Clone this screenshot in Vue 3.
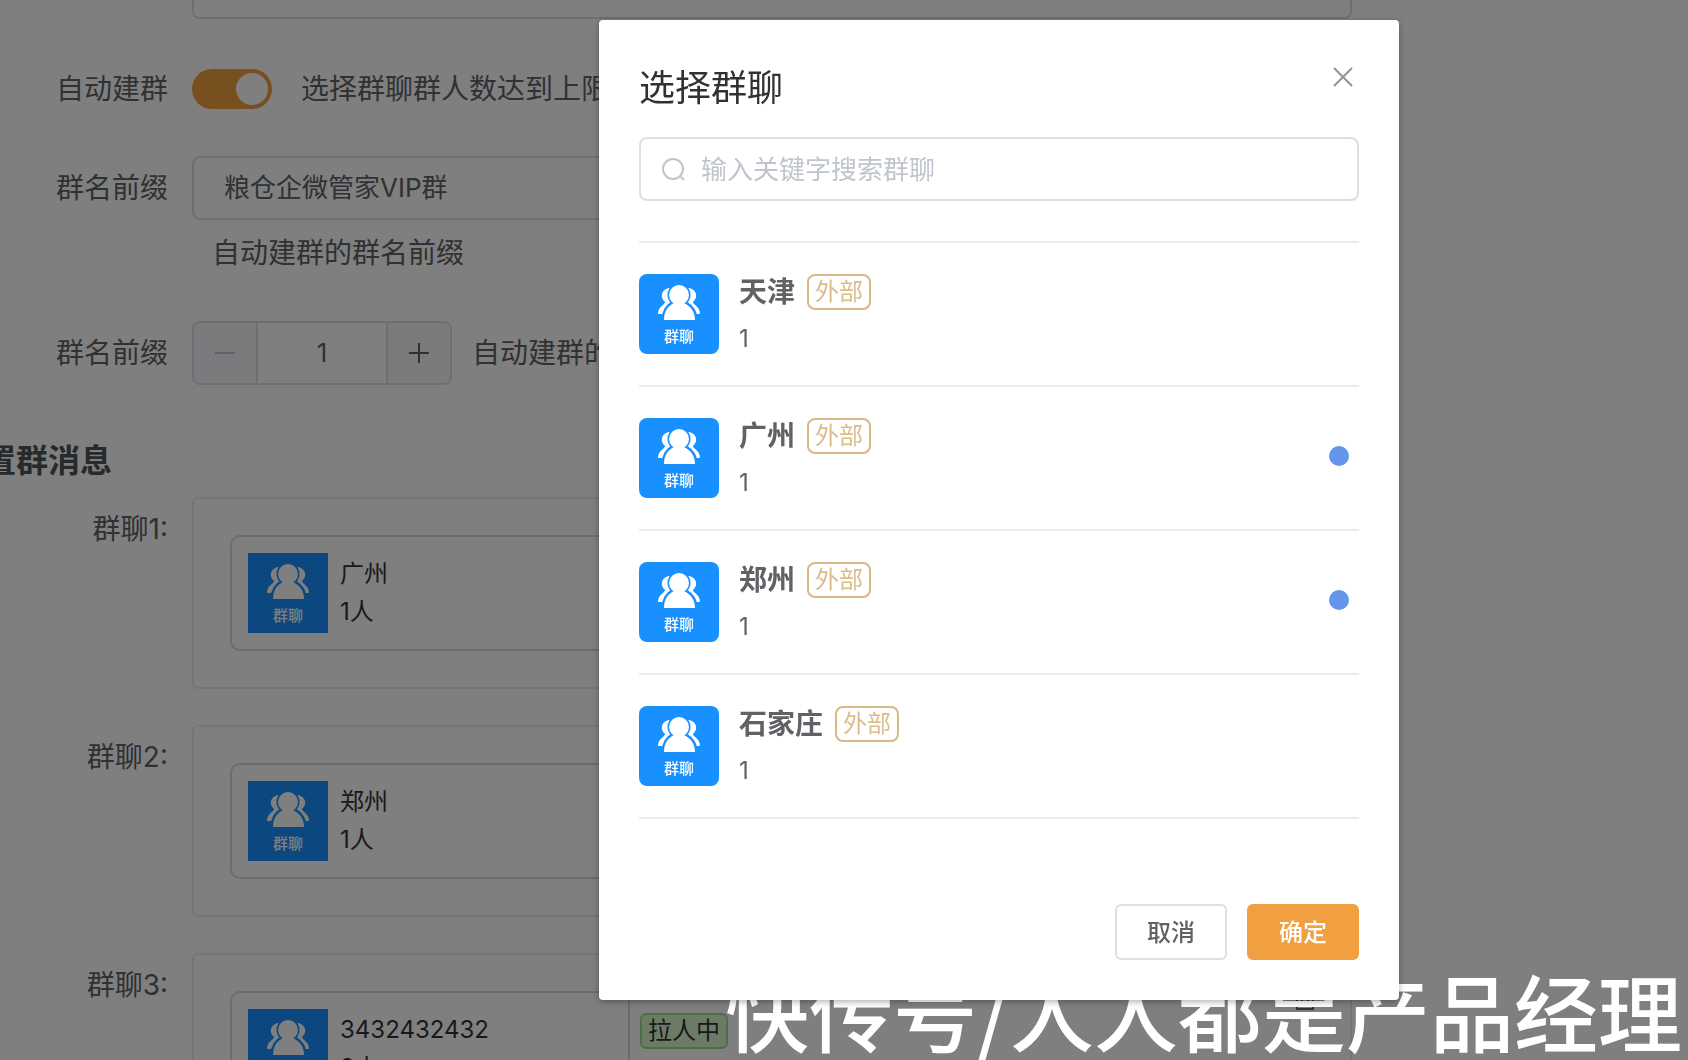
<script setup>
import { ref } from 'vue'

const autoCreate = ref(true)
const prefix = ref('粮仓企微管家VIP群')
const startNumber = ref(1)
const keyword = ref('')

const messages = [
  { label: '群聊1:', name: '广州', count: '1人' },
  { label: '群聊2:', name: '郑州', count: '1人' },
  { label: '群聊3:', name: '3432432432', count: '2人' },
]

const groups = ref([
  { name: '天津', count: 1, selected: false },
  { name: '广州', count: 1, selected: true },
  { name: '郑州', count: 1, selected: true },
  { name: '石家庄', count: 1, selected: false },
])
</script>

<template>
  <div class="page">
    <main class="form">
      <div class="row first">
        <span class="label"></span>
        <textarea class="note" aria-label="群描述"></textarea>
      </div>

      <div class="row auto">
        <label class="label" for="auto">自动建群</label>
        <input id="auto" v-model="autoCreate" class="switch" type="checkbox" role="switch" />
        <span class="switch-text">选择群聊群人数达到上限</span>
      </div>

      <div class="row prefix">
        <label class="label" for="prefix">群名前缀</label>
        <div class="grow">
          <input id="prefix" v-model="prefix" class="text-input" type="text" />
          <p class="help">自动建群的群名前缀</p>
        </div>
      </div>

      <div class="row number">
        <label class="label" for="start">群名前缀</label>
        <div class="stepper">
          <button type="button" disabled aria-label="减少">
            <svg viewBox="0 0 20 20"><path d="M0 10H20" /></svg>
          </button>
          <input id="start" v-model="startNumber" type="text" />
          <button type="button" aria-label="增加" @click="startNumber++">
            <svg viewBox="0 0 20 20"><path d="M0 10H20M10 0V20" /></svg>
          </button>
        </div>
        <span class="number-text">自动建群的</span>
      </div>

      <h2 class="heading">置群消息</h2>

      <div v-for="m in messages" :key="m.label" class="row message">
        <span class="label">{{ m.label }}</span>
        <section class="panel">
          <div class="chat">
            <svg class="avatar" viewBox="0 0 80 80" aria-hidden="true">
              <use href="#people" />
              <text x="40" y="68">群聊</text>
            </svg>
            <div class="chat-text">
              <div>{{ m.name }}</div>
              <div>{{ m.count }}</div>
            </div>
          </div>
          <span class="status">拉人中</span>
          <button class="remove" type="button" aria-label="删除">
            <svg viewBox="0 0 24 20"><path d="M3 4H24M11 4V1H19V4M7 4V18H23V4M12 7V10M18 7V10" /></svg>
          </button>
        </section>
      </div>
    </main>

    <div class="mask"></div>
    <div class="watermark">快传号/人人都是产品经理</div>

    <div class="overlay">
      <section class="dialog" role="dialog" aria-modal="true" aria-labelledby="dialog-title">
        <header class="dialog-head">
          <h1 id="dialog-title">选择群聊</h1>
          <button class="close" type="button" aria-label="关闭">
            <svg viewBox="0 0 20 20"><path d="M1 1L19 19M19 1L1 19" /></svg>
          </button>
        </header>

        <label class="search">
          <svg viewBox="0 0 24 24" aria-hidden="true">
            <circle cx="11" cy="12" r="10" />
            <path d="M18 19L22 23" />
          </svg>
          <input v-model="keyword" type="text" placeholder="输入关键字搜索群聊" aria-label="搜索群聊" />
        </label>

        <ul class="groups">
          <li v-for="g in groups" :key="g.name">
            <label class="group">
              <svg class="avatar rounded" viewBox="0 0 80 80" aria-hidden="true">
                <use href="#people" />
                <text x="40" y="68">群聊</text>
              </svg>
              <span class="info">
                <span class="title">
                  <strong>{{ g.name }}</strong>
                  <span class="tag">外部</span>
                </span>
                <span class="count">{{ g.count }}</span>
              </span>
              <input v-model="g.selected" class="dot" type="checkbox" />
            </label>
          </li>
        </ul>

        <footer class="actions">
          <button type="button">取消</button>
          <button type="button" class="primary">确定</button>
        </footer>
      </section>
    </div>

    <svg class="defs" aria-hidden="true">
      <symbol id="people" viewBox="0 0 80 80">
        <path d="M30 14C23 15 20 23 26 28C26 31 19 32 19 40H24L34 31V15Z" />
        <path d="M50 14C57 15 60 23 54 28C54 31 61 32 61 40H56L46 31V15Z" />
        <g stroke="#1890ff" stroke-width="5">
          <circle cx="40" cy="21" r="9" />
          <path d="M25 46C25 37 29 32 35 29H45C51 32 56 37 56 46Z" />
        </g>
        <circle cx="40" cy="21" r="10" />
        <path d="M25 46C25 37 29 32 35 29H45C51 32 56 37 56 46Z" />
      </symbol>
    </svg>
  </div>
</template>

<style>
body {
  overflow: hidden;
}
</style>

<style scoped>
.page,
.page * {
  box-sizing: border-box;
}
.page {
  height: 100vh;
  overflow: hidden;
  background: #fff;
  color: #606266;
  font-family: Inter, "Noto Sans CJK SC", sans-serif;
  font-size: 28px;
}
button,
input,
textarea {
  margin: 0;
  padding: 0;
  font: inherit;
  color: inherit;
}
svg {
  display: block;
  fill: none;
  stroke: currentColor;
  stroke-width: 2;
}
.defs {
  display: none;
}

/* form behind the dialog */
.form {
  padding-right: 336px;
}
.row {
  display: flex;
  align-items: center;
  line-height: 64px;
}
.label {
  flex: none;
  width: 168px;
  margin-right: 24px;
  text-align: right;
  white-space: nowrap;
}
.grow {
  flex: 1;
}
.note {
  flex: 1;
  height: 19px;
  border: 2px solid #dcdfe6;
  border-top: 0;
  border-radius: 0 0 8px 8px;
  background: #fff;
  resize: none;
}
.auto {
  margin: 38px 0 35px;
}
.switch {
  appearance: none;
  flex: none;
  width: 80px;
  height: 40px;
  padding: 4px;
  border-radius: 20px;
  background: #dcdfe6;
}
.switch:checked {
  background: #f0a040;
}
.switch::before {
  content: "";
  display: block;
  width: 32px;
  height: 32px;
  border-radius: 50%;
  background: #fff;
}
.switch:checked::before {
  margin-left: auto;
}
.switch-text {
  margin-left: 29px;
  white-space: nowrap;
}
.prefix,
.message {
  align-items: flex-start;
}
.text-input {
  display: block;
  width: 100%;
  height: 64px;
  padding: 0 30px;
  border: 2px solid #dcdfe6;
  border-radius: 8px;
  background: #fff;
  font-size: 26px;
}
.help {
  margin: 12px 20px 47px;
  line-height: 42px;
}
.stepper {
  display: flex;
  width: 260px;
  height: 64px;
  overflow: hidden;
  border: 2px solid #dcdfe6;
  border-radius: 8px;
}
.stepper button {
  display: grid;
  place-items: center;
  width: 62px;
  border: 0;
  background: #f5f7fa;
}
.stepper button:disabled {
  color: #c0c4cc;
}
.stepper svg {
  width: 20px;
  height: 20px;
}
.stepper input {
  flex: 1;
  min-width: 0;
  border: solid #dcdfe6;
  border-width: 0 2px;
  background: #fff;
  font-size: 26px;
  text-align: center;
}
.number-text {
  margin-left: 20px;
  white-space: nowrap;
}
.heading {
  margin: 56px 0 16px -16px;
  color: #505255;
  font-size: 32px;
  font-weight: 700;
  line-height: 40px;
}
.message {
  margin-bottom: 36px;
}
.panel {
  display: flex;
  flex: 1;
  align-items: flex-start;
  height: 192px;
  padding: 36px;
  border: 2px solid #ebebeb;
  border-radius: 6px;
}
.chat {
  display: flex;
  gap: 12px;
  width: 400px;
  padding: 16px;
  border: 2px solid #d8d8d8;
  border-radius: 10px;
}
.chat-text {
  padding-top: 2px;
  color: #333;
  font-size: 24px;
  line-height: 38px;
}
.avatar {
  flex: none;
  width: 80px;
  height: 80px;
  background: #1890ff;
  color: #fff;
  fill: #fff;
  stroke: none;
}
.avatar text {
  font-size: 15px;
  font-weight: 500;
  text-anchor: middle;
}
.rounded {
  border-radius: 8px;
}
.status {
  margin: 22px 0 0 10px;
  padding: 0 6px;
  border: 2px solid #96e08c;
  border-radius: 6px;
  background: #d9f7cc;
  color: #333;
  font-size: 24px;
  line-height: 32px;
}
.remove {
  width: 24px;
  height: 20px;
  margin-left: auto;
  border: 0;
  background: none;
}

/* layers over the form */
.mask {
  position: fixed;
  inset: 0;
  background: rgba(0, 0, 0, 0.5);
}
.watermark {
  position: fixed;
  right: 6px;
  bottom: 4px;
  color: #fff;
  font-family: "Noto Sans CJK SC", sans-serif;
  font-size: 84px;
  font-weight: 500;
  line-height: 92px;
  white-space: nowrap;
}
.overlay {
  position: fixed;
  inset: 0;
  display: flex;
  align-items: flex-start;
  justify-content: center;
  padding: 20px 0 0 310px;
}
.dialog {
  width: 800px;
  padding: 40px;
  border-radius: 4px;
  background: #fff;
  box-shadow: 0 2px 6px rgba(0, 0, 0, 0.3);
}
.dialog-head {
  display: flex;
  align-items: flex-start;
  justify-content: space-between;
  margin-bottom: 21px;
}
.dialog-head h1 {
  margin: 0;
  color: #303133;
  font-size: 36px;
  font-weight: 400;
  line-height: 56px;
}
.close {
  width: 32px;
  height: 34px;
  padding: 0 6px;
  border: 0;
  background: none;
  color: #909399;
}
.search {
  display: flex;
  align-items: center;
  gap: 15px;
  height: 64px;
  margin-bottom: 40px;
  padding: 0 21px;
  border: 2px solid #dcdfe6;
  border-radius: 8px;
  color: #c0c4cc;
}
.search svg {
  width: 24px;
  height: 24px;
}
.search input {
  flex: 1;
  border: 0;
  outline: 0;
  color: #606266;
  font-size: 26px;
}
.search input::placeholder {
  color: #c0c4cc;
  opacity: 1;
}
.groups {
  margin: 0 0 85px;
  padding: 0;
  border-top: 2px solid #ebebeb;
  list-style: none;
}
.groups li {
  border-bottom: 2px solid #ebebeb;
}
.group {
  display: flex;
  align-items: flex-start;
  gap: 20px;
  padding: 31px 10px 28px 0;
}
.info {
  display: flex;
  flex: 1;
  flex-direction: column;
  gap: 11px;
}
.title {
  display: flex;
  align-items: center;
  gap: 12px;
}
.title strong {
  font-weight: 700;
  line-height: 36px;
}
.tag {
  padding: 0 6px;
  border: 2px solid #d8b885;
  border-radius: 8px;
  color: #dcbc8a;
  font-size: 24px;
  line-height: 32px;
}
.count {
  font-size: 24px;
  line-height: 36px;
}
.dot {
  appearance: none;
  width: 20px;
  height: 20px;
  margin-top: 28px;
  border-radius: 50%;
}
.dot:checked {
  background: #6495ed;
}
.actions {
  display: flex;
  justify-content: flex-end;
  gap: 20px;
}
.actions button {
  width: 112px;
  height: 56px;
  padding-bottom: 4px;
  border: 2px solid #dcdfe6;
  border-radius: 6px;
  background: #fff;
  font-size: 24px;
  font-weight: 500;
}
.actions .primary {
  border-color: #f0a040;
  background: #f0a040;
  color: #fff;
}
</style>
